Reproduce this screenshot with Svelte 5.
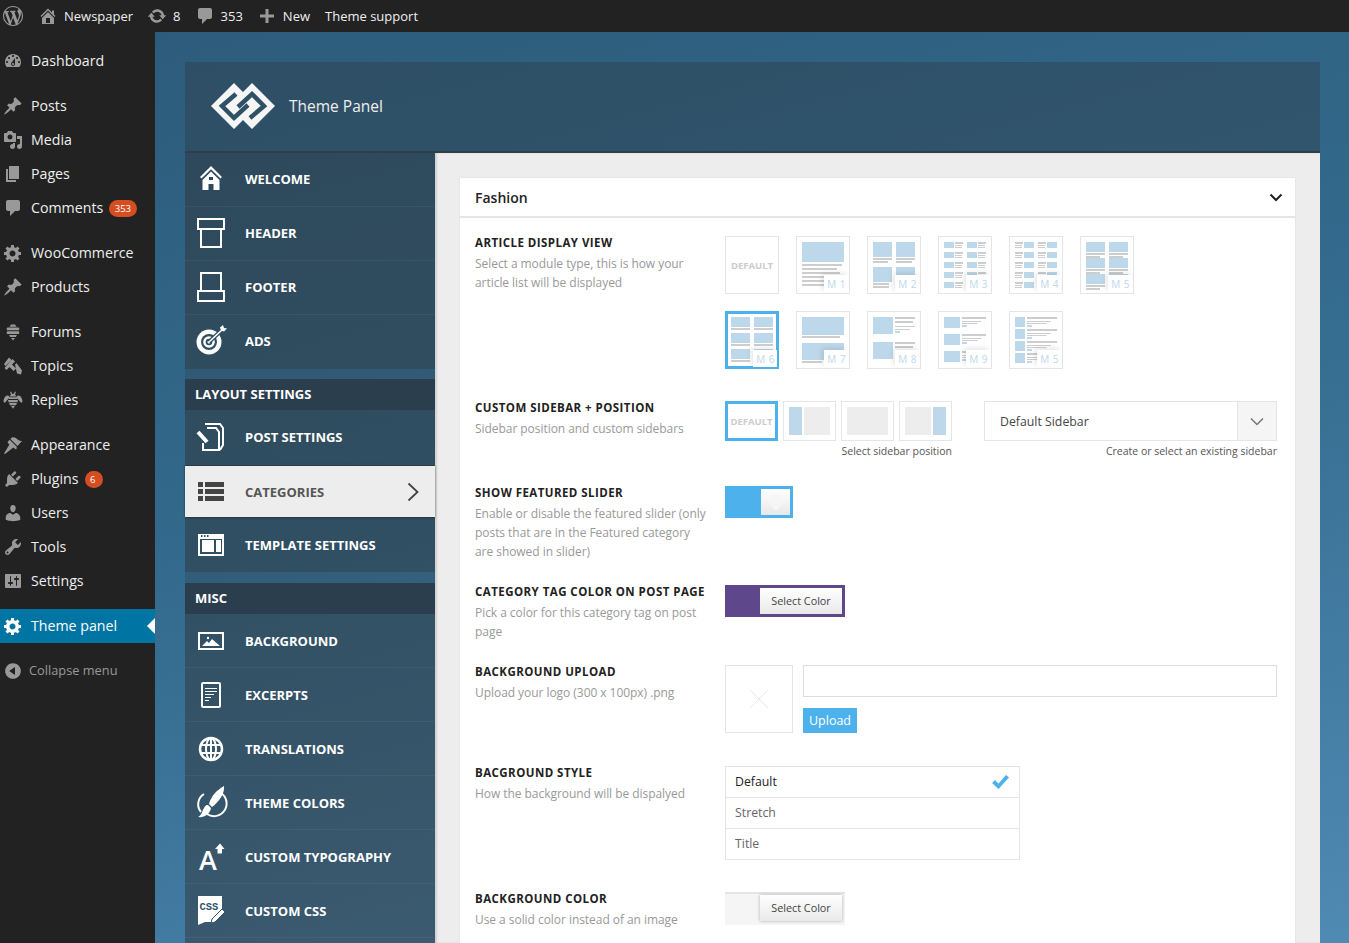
<script>
	// wp admin menu, null = separator gap
	const menu = [
		{ label: 'Dashboard', icon: 'dashboard' },
		null,
		{ label: 'Posts', icon: 'pin' },
		{ label: 'Media', icon: 'media' },
		{ label: 'Pages', icon: 'pages' },
		{ label: 'Comments', icon: 'comment', badge: '353' },
		null,
		{ label: 'WooCommerce', icon: 'gear' },
		{ label: 'Products', icon: 'pin' },
		null,
		{ label: 'Forums', icon: 'forums' },
		{ label: 'Topics', icon: 'topics' },
		{ label: 'Replies', icon: 'replies' },
		null,
		{ label: 'Appearance', icon: 'brush' },
		{ label: 'Plugins', icon: 'plugin', badge: '6' },
		{ label: 'Users', icon: 'user' },
		{ label: 'Tools', icon: 'tools' },
		{ label: 'Settings', icon: 'settings' },
		null,
		{ label: 'Theme panel', icon: 'gear', current: true }
	];

	const dash = {
		wp: 'M20 10c0-5.51-4.49-10-10-10C4.48 0 0 4.49 0 10c0 5.52 4.48 10 10 10 5.51 0 10-4.48 10-10zM7.78 15.37L4.37 6.22c.55-.02 1.17-.08 1.17-.08.5-.06.44-1.13-.06-1.11 0 0-1.45.11-2.37.11-.18 0-.37 0-.58-.01C4.12 2.69 6.87 1.11 10 1.11c2.33 0 4.45.87 6.05 2.34-.68-.11-1.65.39-1.65 1.58 0 .74.45 1.36.9 2.1.35.61.55 1.36.55 2.46 0 1.49-1.4 5-1.4 5l-3.03-8.37c.54-.02.82-.17.82-.17.5-.05.44-1.25-.06-1.22 0 0-1.44.12-2.38.12-.87 0-2.33-.12-2.33-.12-.5-.03-.56 1.2-.06 1.22l.92.08 1.26 3.41zM17.41 10c.24-.64.74-1.87.43-4.25.7 1.29 1.05 2.71 1.05 4.25 0 3.29-1.73 6.24-4.4 7.78.97-2.59 1.94-5.2 2.92-7.78zM6.1 18.09C3.12 16.65 1.11 13.53 1.11 10c0-1.3.23-2.48.72-3.59C3.25 10.3 4.67 14.2 6.1 18.09zm4.03-6.63l2.58 6.98c-.86.29-1.76.45-2.71.45-.79 0-1.57-.11-2.29-.33.81-2.38 1.62-4.74 2.42-7.1z',
		home: 'M16 8.5l1.53 1.53-1.06 1.06L10 4.62l-6.47 6.47-1.06-1.06L10 2.5l4 4v-2h2v4zm-6-2.46l6 5.99V18H4v-5.97zM12 17v-5H8v5h4z',
		update: 'M10.2 3.28c3.53 0 6.43 2.61 6.92 6h2.08l-3.5 4-3.5-4h2.32c-.45-1.97-2.21-3.45-4.32-3.45-1.45 0-2.73.71-3.54 1.78L4.95 5.66C6.23 4.2 8.11 3.28 10.2 3.28zm-.4 13.44c-3.52 0-6.43-2.61-6.92-6H.8l3.5-4c1.17 1.33 2.33 2.67 3.5 4H5.48c.45 1.97 2.21 3.45 4.32 3.45 1.45 0 2.73-.71 3.54-1.78l1.71 1.95c-1.28 1.46-3.15 2.38-5.25 2.38z',
		comment: 'M5 2h10c1.1 0 2 .9 2 2v7c0 1.1-.9 2-2 2h-3l-5 5v-5H5c-1.1 0-2-.9-2-2V4c0-1.1.9-2 2-2z',
		plus: 'M17 8.5v3h-5.5V17h-3v-5.5H3v-3h5.5V3h3v5.5z',
		dashboard: 'M3.76 16h12.48c1.1-1.37 1.76-3.11 1.76-5 0-4.42-3.58-8-8-8s-8 3.58-8 8c0 1.89.66 3.63 1.76 5zM10 4c.55 0 1 .45 1 1s-.45 1-1 1-1-.45-1-1 .45-1 1-1zM6 6c.55 0 1 .45 1 1s-.45 1-1 1-1-.45-1-1 .45-1 1-1zm8 0c.55 0 1 .45 1 1s-.45 1-1 1-1-.45-1-1 .45-1 1-1zm-5.37 5.55L12 7v6c0 1.1-.9 2-2 2s-2-.9-2-2c0-.57.24-1.08.63-1.45zM4 10c.55 0 1 .45 1 1s-.45 1-1 1-1-.45-1-1 .45-1 1-1zm12 0c.55 0 1 .45 1 1s-.45 1-1 1-1-.45-1-1 .45-1 1-1zm-5 3c0-.55-.45-1-1-1s-1 .45-1 1 .45 1 1 1 1-.45 1-1z',
		pin: 'M10.44 3.02l1.82-1.82 6.36 6.35-1.83 1.82c-1.05-.68-2.48-.57-3.41.36l-.75.75c-.92.93-1.04 2.35-.35 3.41l-1.83 1.82-2.41-2.41-2.8 2.79c-.42.42-3.38 2.71-3.8 2.29s1.86-3.39 2.28-3.81l2.79-2.79L4.1 9.36l1.83-1.82c1.05.69 2.48.57 3.4-.36l.75-.75c.93-.92 1.05-2.35.36-3.41z',
		media: 'M13 11V4c0-.55-.45-1-1-1h-1.67L9 1H5L3.67 3H2c-.55 0-1 .45-1 1v7c0 .55.45 1 1 1h10c.55 0 1-.45 1-1zM7 4.5c1.38 0 2.5 1.12 2.5 2.5S8.38 9.5 7 9.5 4.5 8.38 4.5 7 5.62 4.5 7 4.5zM14 6h5v10.5c0 1.38-1.12 2.5-2.5 2.5S14 17.88 14 16.5s1.12-2.5 2.5-2.5c.17 0 .34.02.5.05V9h-3V6zm-4 8.05V13h2v3.5c0 1.38-1.12 2.5-2.5 2.5S7 17.88 7 16.5 8.12 14 9.5 14c.17 0 .34.02.5.05z',
		pages: 'M6 15V2h10v13H6zm-1 1h8v2H3V5h2v11z',
		gear: 'M18 12h-2.18c-.17.7-.44 1.35-.81 1.93l1.54 1.54-2.1 2.1-1.54-1.54c-.58.36-1.23.63-1.91.79V19H8v-2.18c-.68-.16-1.33-.43-1.91-.79l-1.54 1.54-2.12-2.12 1.54-1.54c-.36-.58-.63-1.23-.79-1.91H1V9.03h2.17c.16-.7.44-1.35.8-1.94L2.43 5.55l2.1-2.1 1.54 1.54c.58-.37 1.24-.64 1.93-.81V2h3v2.18c.68.16 1.33.43 1.91.79l1.54-1.54 2.12 2.12-1.54 1.54c.36.59.64 1.24.8 1.94H18V12zm-8.5 1.5c1.66 0 3-1.34 3-3s-1.34-3-3-3-3 1.34-3 3 1.34 3 3 3z',
		forums: 'M8 2.5h4l1.5 2.2h-7zM4.5 5.6h11c.6 0 .8.9.8 1.4s-.2 1.3-.8 1.3h-11C3.9 8.3 3.7 7.5 3.7 7s.2-1.4.8-1.4zM4.5 9.3h11c.6 0 .8.9.8 1.4s-.2 1.3-.8 1.3h-11c-.6 0-.8-.8-.8-1.3s.2-1.4.8-1.4zM6 13h8l-1.2 2H7.200zM8 16h4l-2 2.500z',
		topics: 'M6 1.500l2.500 2.500L2.500 10 1 8zM9.500 3l2.500 2.500L3.500 14 1.500 12zM8.500 8l4.500 4.500-2.500 2.500L6 10.500zM12 8.500l1.500-1.500 5.500 7.500-1 4-4-1z',
		replies: 'M8 1.500l1.200 2.200h1.600L12 1.500l1 .5-1 2.400c.7.500 1.100 1.200 1.100 2H6.900c0-.8.400-1.500 1.100-2L7 2zM6.500 7.200h7l1 1.800h-9zM5 10h10l-.5 2.200h-9zM6 13h8l-1 2.200H7zM8 16h4l-2 2.800zM4.500 5.500c1.200 0 2 .8 2.100 1.800L1.800 13 .5 11.500c0-2.500 1.800-6 4-6zM15.500 5.500c2.200 0 4 3.500 4 6L18.200 13l-4.800-5.700c.1-1 .9-1.800 2.100-1.800z',
		brush: 'M14.480 11.060L7.410 3.990l1.500-1.500c.5-.56 2.300-.47 3.510.32 1.210.8 1.430 1.280 2.910 2.100 1.180.64 2.450 1.260 3.670 1.150zM13.770 11.770L6.700 4.700 4.930 6.470c-.39.39-.39 1.020 0 1.410l1.060 1.060c.39.39.39 1.030 0 1.420L1 18.500l1 .5 7.640-5.990c.39-.39 1.020-.39 1.410 0l1.060 1.060c.39.39 1.030.39 1.420 0z',
		plugin: 'M13.110 4.360L9.870 7.600 8 5.730l3.240-3.240c.35-.34 1.050-.2 1.560.32.52.51.66 1.210.31 1.550zm-8 1.770l.91-1.120 9.010 9.010-1.190.84c-.71.71-2.630 1.160-3.820 1.160H6.140L4.900 17.260c-.59.59-1.540.59-2.120 0-.59-.58-.59-1.530 0-2.120l1.240-1.240v-3.880c0-1.130.4-3.190 1.090-3.890zm7.260 3.970l3.240-3.240c.34-.35 1.040-.21 1.550.31.52.51.66 1.210.31 1.550l-3.240 3.250z',
		user: 'M10 9.250c-2.270 0-2.730-3.440-2.730-3.440C7 4.020 7.820 2 9.970 2c2.160 0 2.980 2.020 2.710 3.810 0 0-.41 3.440-2.680 3.440zm0 2.570L12.720 10c2.390 0 4.520 2.330 4.520 4.530v2.490s-3.650 1.130-7.240 1.130c-3.650 0-7.240-1.130-7.240-1.130v-2.490c0-2.250 1.940-4.480 4.470-4.480z',
		tools: 'M16.680 9.770c-1.340 1.340-3.300 1.670-4.950.99l-5.410 6.520c-.99.99-2.590.99-3.580 0s-.99-2.59 0-3.570l6.520-5.420c-.68-1.650-.35-3.610.99-4.950 1.280-1.280 3.120-1.620 4.720-1.060l-2.890 2.890 2.820 2.820 2.860-2.870c.53 1.580.18 3.390-1.080 4.650zM3.810 16.210c.4.39 1.040.39 1.430 0 .4-.4.4-1.040 0-1.430-.39-.4-1.030-.4-1.430 0-.39.39-.39 1.030 0 1.430z',
		settings: 'M18 16V4c0-.55-.45-1-1-1H3c-.55 0-1 .45-1 1v12c0 .55.45 1 1 1h14c.55 0 1-.45 1-1zM8 11h1c.55 0 1 .45 1 1s-.45 1-1 1H8v1.500c0 .28-.22.5-.5.5s-.5-.22-.5-.5V13H6c-.55 0-1-.45-1-1s.45-1 1-1h1V5.500c0-.28.22-.5.5-.5s.5.22.5.5V11zm5-2h-1c-.55 0-1-.45-1-1s.45-1 1-1h1V5.500c0-.28.22-.5.5-.5s.5.22.5.5V7h1c.55 0 1 .45 1 1s-.45 1-1 1h-1v5.500c0 .28-.22.5-.5.5s-.5-.22-.5-.5V9z',
		collapse: 'M10 2.160c4.330 0 7.840 3.510 7.840 7.840s-3.510 7.840-7.840 7.840S2.160 14.330 2.160 10 5.710 2.160 10 2.160zm2 11.720V6.120L6.180 9.970z'
	};

	// theme panel nav, inner svg markup on a 30x30 box
	const glyphs = {
		welcome: '<path fill="#fff" d="M15 1 4 12l1.500 1.600L15 4.200l9.500 9.400L26 12zM15 6.500 6.500 15v10h6v-6h5v6h6V15z"/><rect x="13" y="12" width="4" height="3" fill="#2b4a5f"/>',
		header: '<g fill="none" stroke="#fff" stroke-width="2"><rect x="2" y="0" width="26" height="10"/><rect x="5" y="10" width="20" height="18"/></g>',
		footer: '<g fill="none" stroke="#fff" stroke-width="2"><rect x="5" y="0" width="20" height="18"/><rect x="2" y="18" width="26" height="10"/></g>',
		ads: '<circle cx="13" cy="15" r="12.500" fill="#fff"/><circle cx="13" cy="15" r="8" fill="#2f4f63"/><circle cx="13" cy="15" r="5.800" fill="#fff"/><circle cx="13" cy="15" r="3.300" fill="#2f4f63"/><circle cx="13" cy="15" r="1.500" fill="#fff"/><path d="M13 15 27 2" stroke="#2f4f63" stroke-width="4"/><path d="M13 15 27 2" stroke="#fff" stroke-width="1.600"/><path d="M27 -2l1 3 3 .5-3 3-3-1-1-3z" fill="#fff"/>',
		post: '<path d="M9 2h15l3 4v17l-3 5" fill="none" stroke="#fff" stroke-width="2"/><path d="M11 6h9l3 4v18H7v-7" fill="none" stroke="#fff" stroke-width="2"/><path d="M2 10l9 10" stroke="#fff" stroke-width="4"/>',
		categories: '<g fill="#444" transform="translate(0 5)"><rect x="2" y="0" width="5" height="5"/><rect x="9" y="0" width="19" height="5"/><rect x="2" y="7" width="5" height="5"/><rect x="9" y="7" width="19" height="5"/><rect x="2" y="14" width="5" height="5"/><rect x="9" y="14" width="19" height="5"/></g>',
		template: '<g transform="translate(0 4)"><rect x="3" y="1" width="24" height="20" fill="none" stroke="#fff" stroke-width="2"/><rect x="3" y="0" width="24" height="5" fill="#fff"/><rect x="6" y="6" width="12" height="12" fill="#fff"/><rect x="20" y="6" width="5" height="12" fill="#fff"/><g fill="#2f546d"><rect x="5" y="1" width="1.500" height="2"/><rect x="8" y="1" width="1.500" height="2"/><rect x="11" y="1" width="1.500" height="2"/></g></g>',
		background: '<rect x="3" y="7" width="24" height="16" fill="none" stroke="#fff" stroke-width="2"/><path d="M6 20l5-5 2 2 3-4 8 7z" fill="#fff"/><circle cx="12" cy="12" r="1.200" fill="#fff"/>',
		excerpts: '<rect x="6" y="3" width="18" height="24" rx="1" fill="none" stroke="#fff" stroke-width="2"/><path d="M9 2h12v2H9zM9 8h12v1H9zM9 11h12v1H9zM9 14h9v1H9zM9 17h6v1H9zM9 20h4v1H9z" fill="#fff"/>',
		globe: '<circle cx="15" cy="15" r="11" fill="none" stroke="#fff" stroke-width="2.500"/><ellipse cx="15" cy="15" rx="5" ry="11" fill="none" stroke="#fff" stroke-width="2"/><path d="M4 11h22M4 19h22M15 4v22" stroke="#fff" stroke-width="2"/>',
		colors: '<path d="M8 6A12 12 0 0 0 5 24M25 5a12 12 0 0 1-14 21" fill="none" stroke="#fff" stroke-width="2"/><path d="M28-2c1 7-5 16-12 21l-3-3C15 8 21 2 28-2z" fill="#fff"/><path d="M12 17l3 3c-1 6-7 10-13 9 4-2 4-6 6-9s2-3 4-3z" fill="#fff"/>',
		typography: '<text x="3" y="28" font-family="Open Sans" font-weight="600" font-size="27" fill="#fff">A</text><path d="M24 1.500l4.500 5.500H26v4.500h-4.500V7H19z" fill="#fff"/>',
		css: '<path d="M2 0h24v19l-7 7-10 0-7 3z" fill="#fff"/><text x="3.500" y="14" font-family="Liberation Mono" font-weight="700" font-size="10.500" fill="#33566e">CSS</text><path d="M15 27l1-4 10-10 3 3-10 10z" fill="#fff" stroke="#33566e"/>'
	};

	const topNav = [{ label: 'WELCOME', icon: 'welcome' }, { label: 'HEADER', icon: 'header' }, { label: 'FOOTER', icon: 'footer' }, { label: 'ADS', icon: 'ads' }];
	const layoutNav = [{ label: 'POST SETTINGS', icon: 'post' }, { label: 'CATEGORIES', icon: 'categories', active: true }, { label: 'TEMPLATE SETTINGS', icon: 'template' }];
	const miscNav = [
		{ label: 'BACKGROUND', icon: 'background' },
		{ label: 'EXCERPTS', icon: 'excerpts' },
		{ label: 'TRANSLATIONS', icon: 'globe' },
		{ label: 'THEME COLORS', icon: 'colors' },
		{ label: 'CUSTOM TYPOGRAPHY', icon: 'typography' },
		{ label: 'CUSTOM CSS', icon: 'css' }
	];

	// thumbnail pieces, [x, y, w, h] on the 54x58 box
	const pic = (x, y, w, h) => ({ x, y, w, h, c: '#bdd8ea' });
	const ln = (x, y, w, h = 2) => ({ x, y, w, h, c: '#cdcdcd' });

	function twoCol(rows, imgH, pitch) {
		const out = [];
		for (let r = 0; r < rows; r++) {
			for (const x of [6, 29]) {
				const y = 6 + r * pitch;
				out.push(pic(x, y, 19, imgH), ln(x, y + imgH + 1, 19), ln(x, y + imgH + 4, 14));
			}
		}
		return out;
	}

	function smallGrid(flip) {
		const out = [];
		for (let r = 0; r < 5; r++) {
			for (const x of [6, 29]) {
				const y = 6 + r * 10;
				const lx = flip ? x : x + 11;
				out.push(pic(flip ? x + 9 : x, y, 10, 6), ln(lx, y, 8), ln(lx, y + 3, 7, 1), ln(lx, y + 5, 7, 1));
			}
		}
		return out;
	}

	function listRows(count, pitch, imgW, imgH) {
		const out = [];
		const lx = 6 + imgW + 2;
		const w = 48 - lx;
		for (let r = 0; r < count; r++) {
			const y = 6 + r * pitch;
			out.push(pic(6, y, imgW, imgH), ln(lx, y, w), ln(lx, y + 4, w * 0.8, 1), ln(lx, y + 6, w * 0.65, 1), pic(lx, y + 8, 5, 2));
		}
		return out;
	}

	const m1 = [pic(6, 6, 42, 20), ln(6, 28, 40), ln(6, 32, 35), ln(6, 36, 38), ln(6, 40, 33), ln(6, 44, 38), ln(6, 48, 30)];
	const m2 = [
		pic(6, 6, 19, 15), ln(6, 22, 19), ln(6, 25, 15),
		pic(29, 6, 19, 15), ln(29, 22, 19), ln(29, 25, 16),
		pic(6, 31, 19, 15), ln(6, 47, 16), ln(6, 50, 16),
		pic(29, 31, 19, 15)
	];
	const m7 = [pic(6, 6, 42, 18), ln(6, 25, 38), pic(6, 32, 42, 17), ln(6, 50, 20)];
	const m8 = [
		pic(6, 6, 20, 17), ln(28, 6, 20), ln(28, 10, 18), ln(28, 15, 20, 1), ln(28, 18, 15, 1), pic(28, 20, 5, 2),
		pic(6, 31, 20, 17), ln(28, 31, 20), ln(28, 35, 18), ln(28, 40, 20, 1)
	];

	const thumbs = [
		{ tag: null, parts: [] },
		{ tag: 'M 1', parts: m1 },
		{ tag: 'M 2', parts: m2 },
		{ tag: 'M 3', parts: smallGrid(false) },
		{ tag: 'M 4', parts: smallGrid(true) },
		{ tag: 'M 5', parts: twoCol(3, 10, 16) },
		{ tag: 'M 6', parts: twoCol(3, 10, 16).filter((p) => p.w !== 14), selected: true },
		{ tag: 'M 7', parts: m7 },
		{ tag: 'M 8', parts: m8 },
		{ tag: 'M 9', parts: listRows(3, 17, 16, 11) },
		{ tag: 'M 5', parts: listRows(4, 12, 10, 10) }
	];

	const styles = ['Default', 'Stretch', 'Title'];
</script>

{#snippet dashicon(name, size)}
	<svg class="dash" width={size} height={size} viewBox="0 0 20 20" aria-hidden="true"><path d={dash[name]} fill="currentColor" /></svg>
{/snippet}

{#snippet navRow(item)}
	<li class="nav-row" class:active={item.active}>
		<svg class="nav-icon" width="30" height="30" viewBox="0 0 30 30" aria-hidden="true">{@html glyphs[item.icon]}</svg>
		<span>{item.label}</span>
		{#if item.active}
			<svg class="chev" width="12" height="20" viewBox="0 0 12 20" aria-hidden="true"><path d="M1.500 1.500 10.500 10 1.500 18.500" fill="none" stroke="#444" stroke-width="1.800" /></svg>
		{/if}
	</li>
{/snippet}

<div class="page">
	<header class="adminbar">
		<span class="wp-logo">{@render dashicon('wp', 20)}</span>
		<span class="bar-item">{@render dashicon('home', 20)}Newspaper</span>
		<span class="bar-item">{@render dashicon('update', 20)}8</span>
		<span class="bar-item">{@render dashicon('comment', 20)}353</span>
		<span class="bar-item">{@render dashicon('plus', 20)}New</span>
		<span class="bar-item">Theme support</span>
	</header>

	<div class="below">
		<aside class="adminmenu">
			<ul>
				{#each menu as item}
					{#if item}
						<li class="menu-item" class:current={item.current}>
							{@render dashicon(item.icon, 20)}
							<span>{item.label}</span>
							{#if item.badge}<em>{item.badge}</em>{/if}
						</li>
					{:else}
						<li class="sep"></li>
					{/if}
				{/each}
				<li class="sep"></li>
				<li class="menu-item collapse">{@render dashicon('collapse', 20)}<span>Collapse menu</span></li>
			</ul>
		</aside>

		<main class="content">
			<section class="panel">
				<div class="panel-head">
					<svg width="66" height="48" viewBox="0 0 66 48" aria-hidden="true">
						<path d="M1 24 24 1l9 9 9-9 23 23-23 23-9-9-9 9z" fill="#f5f5f5" />
						<path d="M26 12 12 24l12 12 14-13M40 36l14-12-12-12-14 13" fill="none" stroke="#2f5166" stroke-width="4.500" />
					</svg>
					<h1>Theme Panel</h1>
				</div>

				<div class="panel-body">
					<nav class="side">
						<ul class="nav-group first">{#each topNav as item}{@render navRow(item)}{/each}</ul>
						<h2>LAYOUT SETTINGS</h2>
						<ul class="nav-group">{#each layoutNav as item}{@render navRow(item)}{/each}</ul>
						<h2>MISC</h2>
						<ul class="nav-group open">{#each miscNav as item}{@render navRow(item)}{/each}</ul>
					</nav>

					<div class="settings">
						<article class="card">
							<div class="card-head">
								<h3>Fashion</h3>
								<svg width="14" height="9" viewBox="0 0 14 9" aria-hidden="true"><path d="M1.500 1.500 7 7l5.500-5.500" fill="none" stroke="#222" stroke-width="2" /></svg>
							</div>

							<div class="rows">
								<div class="row">
									<div class="info">
										<h4>ARTICLE DISPLAY VIEW</h4>
										<p>Select a module type, this is how your article list will be displayed</p>
									</div>
									<div class="thumbs">
										{#each thumbs as t}
											<div class="thumb" class:selected={t.selected}>
												{#if t.tag}
													<svg width="54" height="58" viewBox="0 0 54 58" aria-hidden="true">
														{#each t.parts as p}<rect x={p.x} y={p.y} width={p.w} height={p.h} fill={p.c} />{/each}
													</svg>
													<span class="tag">{t.tag}</span>
												{:else}
													<span class="default">DEFAULT</span>
												{/if}
											</div>
										{/each}
									</div>
								</div>

								<div class="row">
									<div class="info">
										<h4>CUSTOM SIDEBAR + POSITION</h4>
										<p>Sidebar position and custom sidebars</p>
									</div>
									<div class="sidebar-controls">
										<div class="positions">
											<div class="position-list">
												<div class="pos selected"><span>DEFAULT</span></div>
												<div class="pos"><i class="blue narrow"></i><i class="grey"></i></div>
												<div class="pos"><i class="grey"></i></div>
												<div class="pos"><i class="grey"></i><i class="blue narrow"></i></div>
											</div>
											<small>Select sidebar position</small>
										</div>
										<div class="select-wrap">
											<div class="select">
												<span>Default Sidebar</span>
												<div class="arrow">
													<svg width="14" height="9" viewBox="0 0 14 9" aria-hidden="true"><path d="M1 1.500 7 7.500l6-6" fill="none" stroke="#777" stroke-width="1.500" /></svg>
												</div>
											</div>
											<small>Create or select an existing sidebar</small>
										</div>
									</div>
								</div>

								<div class="row">
									<div class="info">
										<h4>SHOW FEATURED SLIDER</h4>
										<p>Enable or disable the featured slider (only posts that are in the Featured category are showed in slider)</p>
									</div>
									<div class="toggle"><div class="knob"><i></i></div></div>
								</div>

								<div class="row">
									<div class="info">
										<h4>CATEGORY TAG COLOR ON POST PAGE</h4>
										<p>Pick a color for this category tag on post page</p>
									</div>
									<div class="color purple"><button>Select Color</button></div>
								</div>

								<div class="row">
									<div class="info">
										<h4>BACKGROUND UPLOAD</h4>
										<p>Upload your logo (300 x 100px) .png</p>
									</div>
									<div class="upload">
										<div class="preview">
											<svg width="20" height="20" viewBox="0 0 20 20" aria-hidden="true"><path d="M1 1l18 18M19 1 1 19" stroke="#e8e8e8" stroke-width="1" /></svg>
										</div>
										<div class="upload-side">
											<div class="field"></div>
											<button class="upload-btn">Upload</button>
										</div>
									</div>
								</div>

								<div class="row">
									<div class="info">
										<h4>BACGROUND STYLE</h4>
										<p>How the background will be dispalyed</p>
									</div>
									<ul class="options">
										{#each styles as s, i}
											<li>
												<span class:on={i === 0}>{s}</span>
												{#if i === 0}
													<svg width="19" height="16" viewBox="0 0 19 16" aria-hidden="true"><path d="M1 9l3-3 3.500 3.500L15 1l3 2.500L7.500 15z" fill="#4db2ec" /></svg>
												{/if}
											</li>
										{/each}
									</ul>
								</div>

								<div class="row">
									<div class="info">
										<h4>BACKGROUND COLOR</h4>
										<p>Use a solid color instead of an image</p>
									</div>
									<div class="color empty"><button>Select Color</button></div>
								</div>
							</div>
						</article>
					</div>
				</div>
			</section>
		</main>
	</div>
</div>

<style>
	:global(body) {
		margin: 0;
		overflow: hidden;
		background: #222;
	}

	ul {
		list-style: none;
		margin: 0;
		padding: 0;
	}

	h1, h2, h3, h4, p {
		margin: 0;
		font-weight: normal;
	}

	.page {
		height: 943px;
		overflow: hidden;
		font-family: 'Open Sans', sans-serif;
		display: flex;
		flex-direction: column;
	}

	/* top bar */
	.adminbar {
		height: 32px;
		flex: none;
		background: #222;
		color: #eee;
		font-size: 13px;
		display: flex;
		align-items: center;
	}

	.wp-logo {
		display: flex;
		color: #999;
		margin-left: 3px;
		margin-right: 15px;
	}

	.bar-item {
		display: flex;
		align-items: center;
		gap: 6px;
		margin-right: 14px;
	}

	.bar-item:last-child {
		margin-left: 1px;
	}

	.bar-item .dash {
		color: #999;
	}

	.below {
		flex: 1;
		display: flex;
		min-height: 0;
	}

	/* wp menu */
	.adminmenu {
		width: 155px;
		flex: none;
		background: #222;
		padding-top: 12px;
	}

	.sep {
		height: 11px;
	}

	.menu-item {
		height: 34px;
		display: flex;
		align-items: center;
		color: #eee;
		font-size: 14.200px;
		position: relative;
		padding-left: 3px;
	}

	.menu-item span {
		margin-bottom: 2px;
	}

	.menu-item .dash {
		color: #999;
		flex: none;
		margin-right: 8px;
	}

	.menu-item em {
		font-style: normal;
		background: #d54e21;
		color: #fff;
		font-size: 9.500px;
		min-width: 7px;
		height: 17px;
		line-height: 17px;
		border-radius: 9px;
		padding: 0 5.500px;
		margin-left: 6px;
	}

	.menu-item.current {
		background: #0074a2;
		color: #fff;
	}

	.menu-item.current .dash {
		color: #fff;
	}

	.menu-item.current::after {
		content: '';
		position: absolute;
		right: 0;
		top: 9px;
		border: 8px solid transparent;
		border-left: 0;
		border-right-color: #fff;
	}

	.menu-item.collapse {
		color: #999;
		font-size: 12.800px;
	}

	.menu-item.collapse .dash {
		margin-right: 6px;
	}

	/* blue page */
	.content {
		flex: 1;
		padding: 30px 29px 0 30px;
		background: linear-gradient(165deg, #2d5c7b 0%, #336a8d 45%, #4f8ab3 100%);
		min-width: 0;
		display: flex;
		flex-direction: column;
	}

	.panel {
		flex: 1;
		display: flex;
		flex-direction: column;
		min-height: 0;
	}

	.panel-head {
		height: 87px;
		padding-bottom: 2px;
		flex: none;
		display: flex;
		align-items: center;
		gap: 13px;
		padding-left: 25px;
		background: rgba(47, 47, 47, 0.3);
		border-bottom: 2px solid #2f3f4a;
	}

	.panel-head h1 {
		color: #eee;
		font-size: 15.500px;
	}

	.panel-body {
		flex: 1;
		display: flex;
		align-items: stretch;
		min-height: 0;
	}

	.side {
		width: 250px;
		flex: none;
		display: flex;
		flex-direction: column;
		background: rgba(47, 47, 47, 0.2);
	}

	.nav-group {
		background: rgba(47, 47, 47, 0.31);
	}

	.nav-group.open {
		flex: 1;
	}

	.nav-row {
		height: 53px;
		display: flex;
		align-items: center;
		color: #fff;
		font-size: 13px;
		font-weight: 700;
		padding-left: 11px;
		border-bottom: 1px solid rgba(255, 255, 255, 0.05);
		position: relative;
	}

	.nav-group.first .nav-row span {
		margin-bottom: 2px;
	}

	.nav-group > .nav-row:last-child {
		border-bottom: 0;
		height: 54px;
	}

	.nav-group.open > .nav-row:last-child {
		border-bottom: 1px solid rgba(255, 255, 255, 0.05);
		height: 53px;
	}

	.nav-row:has(+ .active) {
		height: 54px;
	}

	.nav-icon {
		margin-right: 19px;
		flex: none;
		overflow: visible;
	}

	.nav-row.active {
		background: #ededed;
		color: #555;
		height: 51px;
		margin: 1px 0;
		border: 0;
		box-shadow: 0 1px 2px rgba(0, 0, 0, 0.3), 0 -1px 2px rgba(0, 0, 0, 0.3);
	}

	.chev {
		position: absolute;
		right: 16px;
		top: 16px;
	}

	.side h2 {
		height: 31px;
		line-height: 30px;
		flex: none;
		margin-top: 10px;
		padding-left: 10px;
		background: #2b3e4e;
		color: #fff;
		font-size: 13px;
		font-weight: 700;
	}

	.side h2:last-of-type {
		margin-top: 11px;
	}

	.settings {
		flex: 1;
		background: #ededed;
		padding: 25px 25px 0;
		min-width: 0;
		display: flex;
		flex-direction: column;
		box-shadow: inset 2px 0 2px rgba(0, 0, 0, 0.12);
	}

	/* card */
	.card {
		flex: 1;
		background: #fff;
		box-shadow: 0 0 2px rgba(0, 0, 0, 0.08);
	}

	.card-head {
		height: 38px;
		display: flex;
		align-items: center;
		justify-content: space-between;
		padding: 0 12px 0 15px;
		border-bottom: 2px solid #e5e5e5;
	}

	.card-head h3 {
		font-size: 14px;
		font-weight: 600;
		color: #222;
	}

	.rows {
		padding: 18px 18px 0 15px;
		display: grid;
		grid-template-rows: 165px 85px 99px 80px 101px 126px auto;
	}

	.row {
		display: grid;
		grid-template-columns: 250px 1fr;
		align-items: start;
	}

	.info {
		padding-right: 15px;
	}

	.info h4 {
		font-size: 11.500px;
		font-weight: 700;
		letter-spacing: 0.45px;
		color: #222;
		line-height: 14px;
	}

	.info p {
		font-size: 12px;
		letter-spacing: -0.05px;
		line-height: 19px;
		color: #999;
		margin-top: 4px;
	}

	small {
		display: block;
		font-size: 10.500px;
		color: #555;
		text-align: right;
		margin-top: 3px;
	}

	/* module thumbs */
	.thumbs {
		display: grid;
		grid-template-columns: repeat(6, 54px);
		gap: 17px;
	}

	.thumb {
		width: 54px;
		height: 58px;
		box-sizing: border-box;
		position: relative;
		overflow: hidden;
		box-shadow: inset 0 0 0 1px #e5e5e5;
		display: flex;
		align-items: center;
		justify-content: center;
	}

	.thumb svg {
		position: absolute;
		left: 0;
		top: 0;
	}

	.thumb.selected {
		box-shadow: inset 0 0 0 3px #4db2ec;
	}

	.tag {
		position: absolute;
		left: 28px;
		top: 39px;
		width: 24px;
		height: 17px;
		background: #fff;
		box-shadow: -2px -2px 5px rgba(0, 0, 0, 0.1);
		color: #bdd8ea;
		font-size: 10px;
		line-height: 19px;
		letter-spacing: 0.5px;
		text-align: right;
		padding-right: 2px;
		box-sizing: border-box;
		white-space: nowrap;
	}

	.default {
		font-size: 9.500px;
		font-weight: 700;
		color: #ccc;
	}

	/* sidebar position */
	.sidebar-controls {
		display: flex;
		gap: 32px;
	}

	.position-list {
		display: flex;
		gap: 5px;
	}

	.pos {
		width: 53px;
		height: 40px;
		box-sizing: border-box;
		border: 1px solid #e5e5e5;
		padding: 5px;
		display: flex;
		gap: 2px;
		align-items: stretch;
		justify-content: center;
	}

	.pos.selected {
		border: 3px solid #4db2ec;
		padding: 0;
		align-items: center;
	}

	.pos span {
		font-size: 9.500px;
		font-weight: 700;
		color: #ccc;
	}

	.pos i {
		display: block;
	}

	.pos .grey {
		flex: 1;
		background: #ededed;
	}

	.pos .blue {
		background: #bdd8ea;
	}

	.pos .narrow {
		width: 13px;
		flex: none;
	}

	.select-wrap {
		width: 293px;
	}

	.select {
		height: 40px;
		box-sizing: border-box;
		border: 1px solid #e5e5e5;
		display: flex;
		align-items: center;
		justify-content: space-between;
		padding-left: 15px;
		font-size: 12.300px;
		color: #444;
	}

	.arrow {
		width: 39px;
		box-sizing: border-box;
		height: 100%;
		background: #f5f5f5;
		border-left: 1px solid #e5e5e5;
		display: flex;
		align-items: center;
		justify-content: center;
	}

	/* toggle */
	.toggle {
		width: 68px;
		height: 32px;
		box-sizing: border-box;
		background: #4db2ec;
		padding: 3px;
		display: flex;
		justify-content: flex-end;
	}

	.knob {
		width: 29px;
		background: linear-gradient(#fff, #e8e8e8);
		display: flex;
		align-items: center;
		justify-content: center;
	}

	.knob i {
		display: block;
		width: 10px;
		height: 16px;
		border-radius: 50%;
		background: #f6f6f6;
	}

	/* colour picker */
	.color {
		width: 120px;
		height: 32px;
		box-sizing: border-box;
		padding: 3px;
		display: flex;
		justify-content: flex-end;
	}

	.color.purple {
		background: #5f478c;
	}

	.color.empty {
		background: #f5f5f5;
		box-shadow: inset 0 2px 0 #e5e5e5;
		height: 33px;
		padding: 3px 3px 4px;
	}

	.color button {
		width: 82px;
		border: 0;
		padding: 0 0 2px;
		background: linear-gradient(#fff, #e9e9e9);
		color: #444;
		font-family: inherit;
		font-size: 10.800px;
	}

	.color.empty button {
		box-shadow: 0 0 3px rgba(0, 0, 0, 0.3);
	}

	/* upload */
	.upload {
		display: flex;
		gap: 10px;
	}

	.preview {
		width: 68px;
		height: 68px;
		flex: none;
		box-sizing: border-box;
		border: 1px solid #e5e5e5;
		display: flex;
		align-items: center;
		justify-content: center;
	}

	.upload-side {
		flex: 1;
	}

	.field {
		height: 32px;
		box-sizing: border-box;
		border: 1px solid #ddd;
	}

	.upload-btn {
		display: block;
		margin-top: 11px;
		width: 54px;
		height: 25px;
		border: 0;
		padding: 0;
		background: #4db2ec;
		color: #fff;
		font-family: inherit;
		font-size: 12.500px;
	}

	/* style list */
	.options {
		width: 295px;
		box-sizing: border-box;
		border: 1px solid #e5e5e5;
	}

	.options li {
		height: 31px;
		box-sizing: border-box;
		display: flex;
		align-items: center;
		justify-content: space-between;
		padding: 0 9px 1px;
		font-size: 12.300px;
		color: #666;
		border-bottom: 1px solid #e5e5e5;
	}

	.options li:last-child {
		border-bottom: 0;
		height: 30px;
	}

	.options .on {
		color: #222;
	}
</style>
